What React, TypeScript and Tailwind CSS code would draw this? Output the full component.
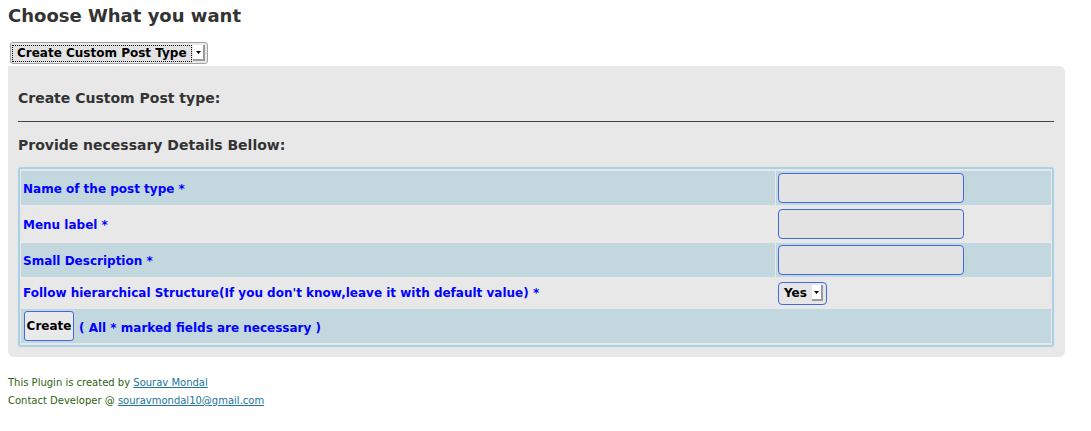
import React from "react";

function Arrow() {
  return (
    <svg width="5" height="3" viewBox="0 0 5 3" className="block">
      <polygon points="0,0 5,0 2.5,3" fill="#000" />
    </svg>
  );
}

const rows = [
  { label: "Name of the post type *", kind: "input", bg: "bg-[#c2d7de]" },
  { label: "Menu label *", kind: "input", bg: "bg-transparent" },
  { label: "Small Description *", kind: "input", bg: "bg-[#c2d7de]" },
];

export default function App() {
  return (
    <div className="min-h-[431px] w-full bg-white font-['DejaVu_Sans',sans-serif] text-[#333]">
      <h2 className="ml-[8px] pt-[4px] text-[18px] font-bold leading-[24px] text-[#333]">
        Choose What you want
      </h2>

      <div className="ml-[10px] mt-[14px] flex h-[22px] w-[198px] items-center rounded-[3px] border border-[#a3a3a3] bg-[#e9e9e9] pl-[1px] pr-[2px]">
        <div className="flex h-[17px] flex-1 items-center border border-dotted border-black bg-[#e3e3e3] pl-[4px] text-[12px] font-bold leading-none text-black">
          Create Custom Post Type
        </div>
        <div className="ml-[1px] flex h-[16px] w-[12px] items-center justify-center border-b-2 border-r-2 border-[#9a9a9a] bg-white">
          <Arrow />
        </div>
      </div>

      <div className="ml-[8px] mr-[26px] mt-[2px] rounded-[6px] rounded-tl-none bg-[#e8e8e8] pb-[10px] pl-[10px] pr-[11px] pt-[23px]">
        <h3 className="text-[14px] font-bold leading-[18px] text-[#333]">Create Custom Post type:</h3>
        <div className="mt-[14px] h-[1px] bg-[#444]" />
        <h3 className="mt-[14px] text-[14px] font-bold leading-[18px] text-[#333]">
          Provide necessary Details Bellow:
        </h3>

        <table className="mt-[13px] w-full border-separate border-spacing-x-[1px] border-spacing-y-[2px] rounded-[3px] border-2 border-[#a9d0e4]">
          <tbody>
            {rows.map((r) => (
              <tr key={r.label} className={r.bg}>
                <td className="h-[34px] px-[2px] pb-[1px] pt-[3px] align-middle text-[12px] font-bold leading-none text-[#0000ff]">
                  {r.label}
                </td>
                <td className="h-[34px] w-[275px] p-[2px] align-middle">
                  <div className="h-[30px] w-[186px] rounded-[4px] border border-[#4169e1] bg-[#e3e3e3]" />
                </td>
              </tr>
            ))}
            <tr>
              <td className="h-[28px] p-[2px] align-middle text-[12px] font-bold leading-none text-[#0000ff]">
                Follow hierarchical Structure(If you don't know,leave it with default value) *
              </td>
              <td className="h-[28px] w-[275px] p-[2px] align-middle">
                <div className="flex h-[23px] w-[49px] items-center rounded-[4px] border border-[#4169e1] bg-[#e6e6e6] pl-[5px]">
                  <span className="text-[12px] font-bold leading-none text-black">Yes</span>
                  <div className="ml-[5px] flex h-[16px] w-[11px] items-center justify-center border-b-2 border-r-2 border-[#9a9a9a] bg-white">
                    <Arrow />
                  </div>
                </div>
              </td>
            </tr>
            <tr className="bg-[#c2d7de]">
              <td colSpan={2} className="h-[34px] p-[2px] align-middle">
                <div className="flex items-center">
                  <div className="ml-[1px] flex h-[30px] w-[50px] items-center justify-center rounded-[3px] border border-[#4169e1] bg-[#e9e9e9] text-[12px] font-bold leading-none text-black">
                    Create
                  </div>
                  <span className="ml-[5px] mt-[3px] text-[12px] font-bold leading-none text-[#0000ff]">
                    ( All * marked fields are necessary )
                  </span>
                </div>
              </td>
            </tr>
          </tbody>
        </table>
      </div>

      <div className="ml-[8px] mt-[17px] text-[10px] leading-[18px] text-[#2e6410]">
        <div>
          This Plugin is created by <span className="text-[#21759b] underline">Sourav Mondal</span>
        </div>
        <div>
          Contact Developer @ <span className="text-[#21759b] underline">souravmondal10@gmail.com</span>
        </div>
      </div>
    </div>
  );
}
